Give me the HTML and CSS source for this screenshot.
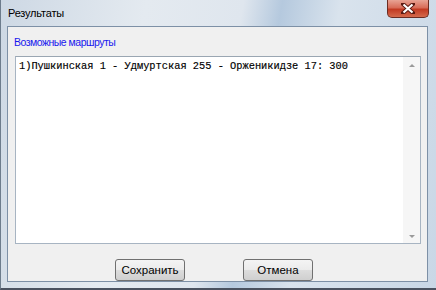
FILE: index.html
```html
<!DOCTYPE html>
<html lang="ru">
<head>
    <meta charset="UTF-8">
    <title>Результаты</title>
    <link rel="stylesheet" href="styles.css">
</head>
<body>
    <div id="window">
        <div id="titlebar">
            <span id="title">Результаты</span>
            <button id="close">
                <svg width="14" height="11" viewBox="0 0 14 11">
                    <path d="M2 1 L12 10 M12 1 L2 10" stroke="#5a1a12" stroke-width="4" stroke-linecap="square"/>
                    <path d="M2.5 1.5 L11.5 9.5 M11.5 1.5 L2.5 9.5" stroke="#fff" stroke-width="2.2"/>
                </svg>
            </button>
        </div>
        <div id="client">
            <div class="caption">Возможные маршруты</div>
            <div class="memo">
                <div class="memo-text">1)Пушкинская 1 - Удмуртская 255 - Орженикидзе 17: 300</div>
                <div class="scrollbar">
                    <span class="arrow up"></span>
                    <span class="arrow down"></span>
                </div>
            </div>
            <div class="buttons">
                <button class="btn">Сохранить</button>
                <button class="btn">Отмена</button>
            </div>
        </div>
    </div>
</body>
</html>
```

FILE: styles.css
```css
html, body{
  margin: 0;
  padding: 0;
  background: #3a4048;
}
#window{
  display: flex;
  flex-direction: column;
  width: 436px;
  height: 290px;
  box-sizing: border-box;
  padding: 0 8px 6px 6px;
  background: linear-gradient(100deg, #cdd8e4 0%, #e4eaf0 30%, #dfe6ee 50%, #b5c9de 58%, #d9e3ed 70%, #c9d7e6 100%);
  border-left: 1px solid #6d7c8c;
  border-bottom: 2px solid #4a5260;
  font-family: "Liberation Sans", Arial, sans-serif;
  font-size: 11px;
}
#titlebar{
  position: relative;
  height: 26px;
  flex: none;
}
#title{
  display: block;
  padding: 6px 0 0 1px;
  line-height: 14px;
  font-size: 11px;
  letter-spacing: -0.2px;
  color: #000;
}
#close{
  position: absolute;
  top: 0;
  right: -1px;
  width: 42px;
  height: 18px;
  padding: 0;
  border: 1px solid #6b2c22;
  border-top: none;
  border-radius: 0 0 5px 5px;
  background: linear-gradient(#e8a394 0%, #d86c58 45%, #c23a22 55%, #d56a4c 100%);
  display: flex;
  align-items: center;
  justify-content: center;
}
#client{
  flex: 1;
  display: flex;
  flex-direction: column;
  padding: 9px 6px 0 7px;
  background: #f0f0f0;
  border: 1px solid #7d90a6;
  overflow: hidden;
}
.caption{
  color: #1818ee;
  line-height: 13px;
  font-size: 10.5px;
  letter-spacing: -0.5px;
  margin-left: -1px;
}
.memo{
  display: flex;
  height: 190px;
  box-sizing: border-box;
  margin-top: 7px;
  background: #fff;
  border: 1px solid #a7b4c2;
  border-top-color: #9aa6b2;
}
.memo-text{
  flex: 1;
  padding: 3px 0 0 3px;
  font-family: "Liberation Mono", "Courier New", monospace;
  font-size: 10.35px;
  line-height: 12px;
  color: #000;
  white-space: pre;
  -webkit-text-stroke: 0.15px #000;
}
.scrollbar{
  width: 17px;
  display: flex;
  flex-direction: column;
  justify-content: space-between;
  align-items: center;
  padding: 7px 0 5px 0;
  background: #f6f6f6;
}
.arrow{
  width: 0;
  height: 0;
  border-left: 3px solid transparent;
  border-right: 3px solid transparent;
}
.arrow.up{
  border-bottom: 3px solid #9a9a9a;
}
.arrow.down{
  border-top: 3px solid #9a9a9a;
}
.buttons{
  display: flex;
  justify-content: center;
  gap: 58px;
  margin-top: 15px;
  padding-right: 8px;
}
.btn{
  width: 70px;
  height: 22px;
  padding: 0;
  border: 1px solid #707070;
  border-radius: 3px;
  background: linear-gradient(#f4f4f4 0%, #ebebeb 50%, #dddddd 51%, #cfcfcf 100%);
  font-family: "Liberation Sans", Arial, sans-serif;
  font-size: 11.5px;
  color: #000;
}
```
